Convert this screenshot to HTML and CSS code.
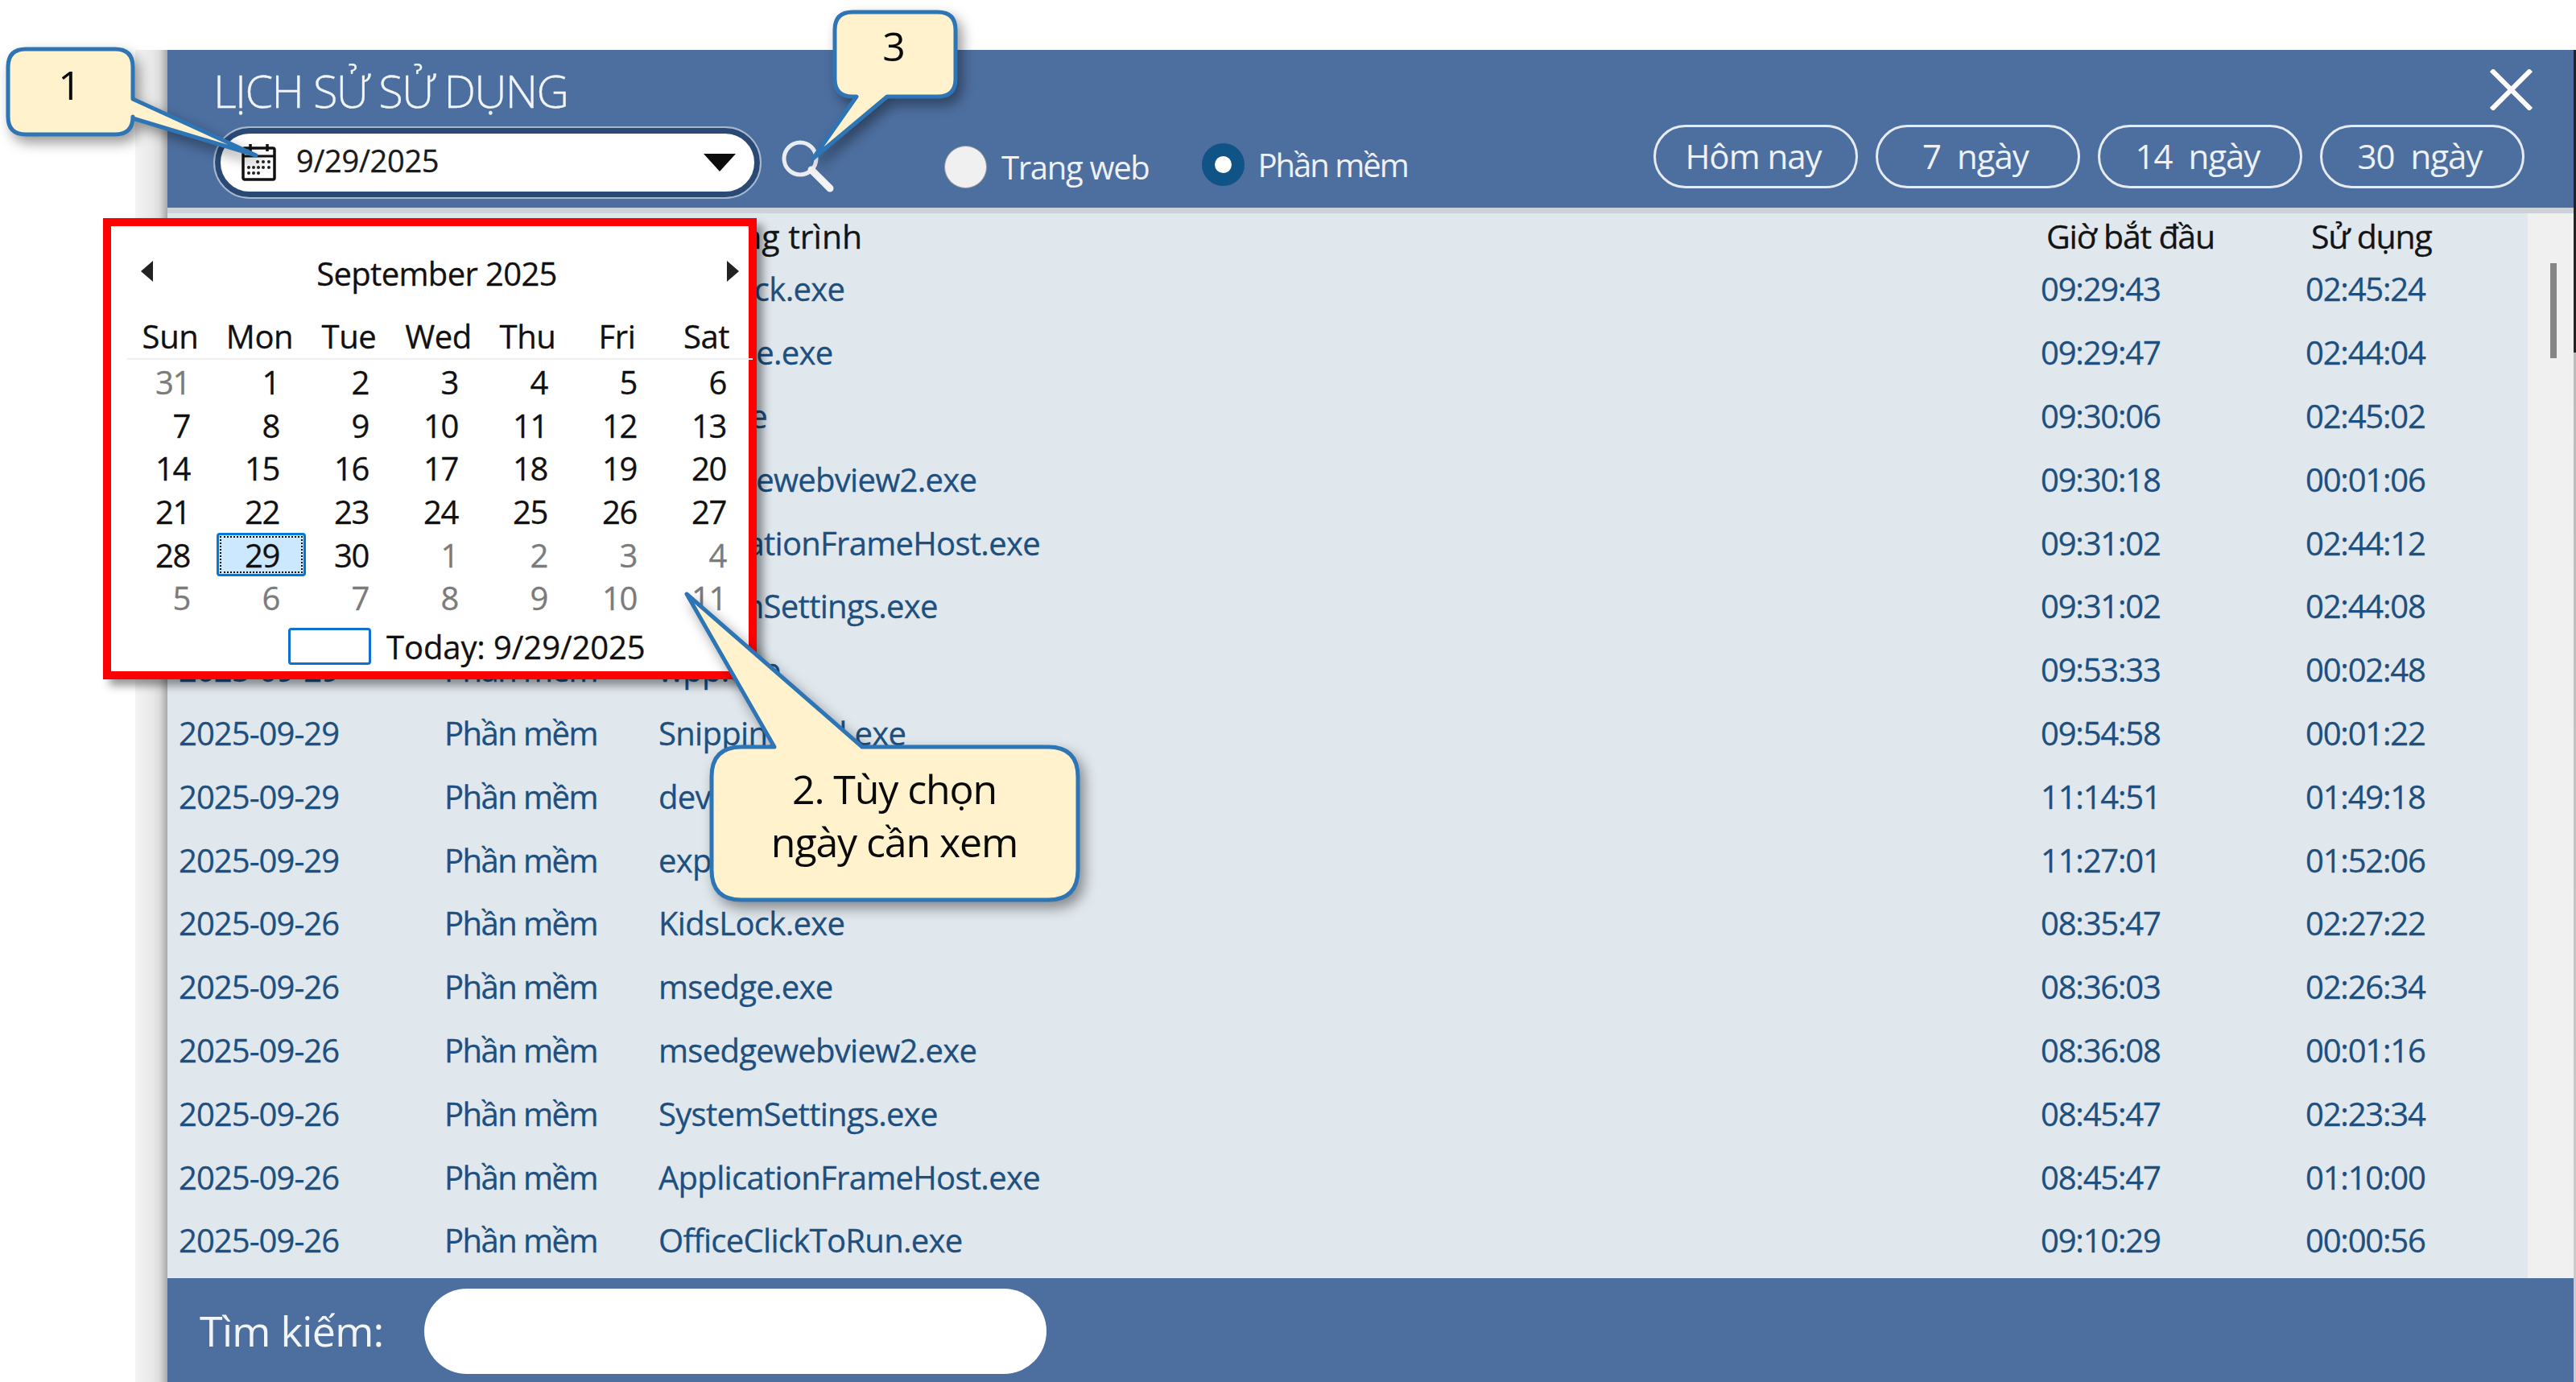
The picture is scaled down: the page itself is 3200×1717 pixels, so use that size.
FILE: index.html
```html
<!DOCTYPE html>
<html lang="vi">
<head>
  <meta charset="UTF-8">
  <title>Lịch sử sử dụng</title>
  <link rel="stylesheet" href="styles.css">
</head>
<body>
<div class="window">
  <div class="edge"></div>
  <div class="main">
    <header class="head">
      <div class="head-top">
        <h1 class="title">LỊCH SỬ SỬ DỤNG</h1>
        <svg class="close" viewBox="0 0 53 51"><path d="M2 1 L51 50 M51 1 L2 50"/></svg>
      </div>
      <div class="controls">
        <div class="datebox">
          <svg class="cal-icon" viewBox="0 0 43 46">
            <rect x="2" y="5" width="39" height="39" rx="2" fill="#fff" stroke="#111" stroke-width="3.500"/>
            <path d="M2 15h39" stroke="#111" stroke-width="3"/>
            <path d="M11 0v9M32 0v9" stroke="#111" stroke-width="3.500"/>
            <g fill="#222">
              <circle cx="20" cy="22" r="2"/><circle cx="27" cy="22" r="2"/><circle cx="34" cy="22" r="2"/>
              <circle cx="9" cy="29" r="2"/><circle cx="15" cy="29" r="2"/><circle cx="21" cy="29" r="2"/><circle cx="27" cy="29" r="2"/><circle cx="34" cy="29" r="2"/>
              <circle cx="9" cy="36" r="2"/><circle cx="15" cy="36" r="2"/><circle cx="21" cy="36" r="2"/>
            </g>
          </svg>
          <span class="datebox-text">9/29/2025</span>
          <span class="datebox-arrow"></span>
        </div>
        <svg class="search" viewBox="0 0 66 66">
          <circle cx="24" cy="24" r="20" fill="none" stroke="#e9edf2" stroke-width="5"/>
          <path d="M38 38 L61 61" stroke="#f4f4f4" stroke-width="9" stroke-linecap="round"/>
        </svg>
        <label class="radio radio-web"><span class="dot"></span>Trang web</label>
        <label class="radio radio-app"><span class="dot dot-on"></span>Phần mềm</label>
        <div class="pills">
          <button class="pill">Hôm nay</button>
          <button class="pill">7&nbsp; ngày</button>
          <button class="pill">14&nbsp; ngày</button>
          <button class="pill">30&nbsp; ngày</button>
        </div>
      </div>
    </header>
    <div class="head-line"></div>
    <div class="content">
      <div class="list">
        <div class="row row-head"><span>Ngày</span><span>Loại</span><span>Chương trình</span><span class="shift">Giờ bắt đầu</span><span class="shift">Sử dụng</span></div>
        <div class="row"><span>2025-09-29</span><span>Phần mềm</span><span>KidsLock.exe</span><span>09:29:43</span><span>02:45:24</span></div>
        <div class="row"><span>2025-09-29</span><span>Phần mềm</span><span>msedge.exe</span><span>09:29:47</span><span>02:44:04</span></div>
        <div class="row"><span>2025-09-29</span><span>Phần mềm</span><span>vds.exe</span><span>09:30:06</span><span>02:45:02</span></div>
        <div class="row"><span>2025-09-29</span><span>Phần mềm</span><span>msedgewebview2.exe</span><span>09:30:18</span><span>00:01:06</span></div>
        <div class="row"><span>2025-09-29</span><span>Phần mềm</span><span>ApplicationFrameHost.exe</span><span>09:31:02</span><span>02:44:12</span></div>
        <div class="row"><span>2025-09-29</span><span>Phần mềm</span><span>SystemSettings.exe</span><span>09:31:02</span><span>02:44:08</span></div>
        <div class="row"><span>2025-09-29</span><span>Phần mềm</span><span>wpp.exe</span><span>09:53:33</span><span>00:02:48</span></div>
        <div class="row"><span>2025-09-29</span><span>Phần mềm</span><span>SnippingTool.exe</span><span>09:54:58</span><span>00:01:22</span></div>
        <div class="row"><span>2025-09-29</span><span>Phần mềm</span><span>devenv.exe</span><span>11:14:51</span><span>01:49:18</span></div>
        <div class="row"><span>2025-09-29</span><span>Phần mềm</span><span>explorer.exe</span><span>11:27:01</span><span>01:52:06</span></div>
        <div class="row"><span>2025-09-26</span><span>Phần mềm</span><span>KidsLock.exe</span><span>08:35:47</span><span>02:27:22</span></div>
        <div class="row"><span>2025-09-26</span><span>Phần mềm</span><span>msedge.exe</span><span>08:36:03</span><span>02:26:34</span></div>
        <div class="row"><span>2025-09-26</span><span>Phần mềm</span><span>msedgewebview2.exe</span><span>08:36:08</span><span>00:01:16</span></div>
        <div class="row"><span>2025-09-26</span><span>Phần mềm</span><span>SystemSettings.exe</span><span>08:45:47</span><span>02:23:34</span></div>
        <div class="row"><span>2025-09-26</span><span>Phần mềm</span><span>ApplicationFrameHost.exe</span><span>08:45:47</span><span>01:10:00</span></div>
        <div class="row"><span>2025-09-26</span><span>Phần mềm</span><span>OfficeClickToRun.exe</span><span>09:10:29</span><span>00:00:56</span></div>
      </div>
      <div class="scroll"><div class="thumb"></div></div>
    </div>
    <footer class="foot">
      <label class="foot-label">Tìm kiếm:</label>
      <div class="foot-input"></div>
    </footer>
  </div>
  <div class="rail"></div>
</div>

<div class="calendar">
  <div class="cal-head">
    <span class="tri tri-left"></span>
    <span class="cal-title">September 2025</span>
    <span class="tri tri-right"></span>
  </div>
  <div class="cal-week">
    <span>Sun</span><span>Mon</span><span>Tue</span><span>Wed</span><span>Thu</span><span>Fri</span><span>Sat</span>
  </div>
  <div class="cal-days">
    <span class="off">31</span><span>1</span><span>2</span><span>3</span><span>4</span><span>5</span><span>6</span>
    <span>7</span><span>8</span><span>9</span><span>10</span><span>11</span><span>12</span><span>13</span>
    <span>14</span><span>15</span><span>16</span><span>17</span><span>18</span><span>19</span><span>20</span>
    <span>21</span><span>22</span><span>23</span><span>24</span><span>25</span><span>26</span><span>27</span>
    <span>28</span><span class="sel">29</span><span>30</span><span class="off">1</span><span class="off">2</span><span class="off">3</span><span class="off">4</span>
    <span class="off">5</span><span class="off">6</span><span class="off">7</span><span class="off">8</span><span class="off">9</span><span class="off">10</span><span class="off">11</span>
  </div>
  <div class="cal-today"><span class="today-box"></span>Today: 9/29/2025</div>
</div>

<!-- callouts sit on top of everything -->
<svg class="callouts" viewBox="0 0 3200 1717">
  <path class="bubble" d="M32 61 H143 Q165 61 165 83 V123 L318 193 L165 147 V145 Q165 167 143 167 H32 Q10 167 10 145 V83 Q10 61 32 61Z"/>
  <path class="bubble" d="M1059 15 H1165 Q1187 15 1187 37 V98 Q1187 120 1165 120 H1102 L1010 197 L1064 120 H1059 Q1037 120 1037 98 V37 Q1037 15 1059 15Z"/>
  <path class="bubble" d="M921 928 H962 L853 738 L1071 928 H1302 Q1339 928 1339 965 V1081 Q1339 1118 1302 1118 H921 Q884 1118 884 1081 V965 Q884 928 921 928Z"/>
  <text class="bubble-text" x="86" y="124">1</text>
  <text class="bubble-text" x="1110" y="76">3</text>
  <text class="bubble-text" x="1111" y="999">2. Tùy chọn</text>
  <text class="bubble-text" x="1111" y="1065">ngày cần xem</text>
</svg>
</body>
</html>
```

FILE: styles.css
```css
html, body {
  margin: 0;
  padding: 0;
  background: #fff;
  width: 3200px;
  height: 1717px;
  overflow: hidden;
}

body {
  font-family: "Open Sans", "Noto Sans", sans-serif;
  position: relative;
}

.window {
  display: flex;
  margin: 62px 0 0 168px;
  width: 3032px;
  height: 1655px;
}

.edge {
  width: 40px;
  background: linear-gradient(to right, #f4f4f4, #e8e8e8 55%, #dcdcdc 75%, #a8a8a8);
}

.main {
  width: 2989px;
  display: flex;
  flex-direction: column;
}

.rail {
  width: 3px;
  background: linear-gradient(to bottom, #222 0, #222 376px, #bbb 376px, #ccc 100%);
}

/* header */
.head {
  height: 196px;
  background: #4d6fa0;
  color: #fff;
  padding: 0 61px 0 57px;
  box-sizing: border-box;
}

.head-top {
  display: flex;
  justify-content: space-between;
  align-items: flex-start;
  height: 93px;
}

.title {
  margin: 13px 0 0;
  font-size: 56px;
  font-weight: 300;
  letter-spacing: -1.7px;
  line-height: 74px;
  color: #f2f5f8;
  -webkit-text-stroke: 0.3px #f2f5f8;
}

.close {
  width: 53px;
  height: 51px;
  margin: 24px -10px 0 0;
}

.close path {
  stroke: #fff;
  stroke-width: 6;
  fill: none;
}

.controls {
  display: flex;
  align-items: flex-start;
}

.datebox {
  width: 677px;
  height: 86px;
  margin: 4px 0 0 2px;
  box-sizing: border-box;
  background: #fff;
  border: 7px solid #2a4a75;
  outline: 2px solid #a9b8cd;
  border-radius: 43px;
  display: flex;
  align-items: center;
  padding: 0 23px 0 26px;
}

.cal-icon {
  width: 43px;
  height: 46px;
}

.datebox-text {
  margin-left: 25px;
  padding-bottom: 7px;
  font-size: 38px;
  letter-spacing: -0.3px;
  color: #1a1a1a;
  -webkit-text-stroke: 0.3px #1a1a1a;
}

.datebox-arrow {
  margin-left: auto;
  width: 0;
  height: 0;
  border-left: 20px solid transparent;
  border-right: 20px solid transparent;
  border-top: 22px solid #0c0c0c;
}

.search {
  width: 66px;
  height: 66px;
  margin: 18px 0 0 26px;
}

.radio {
  display: flex;
  align-items: center;
  font-size: 40px;
  letter-spacing: -1.3px;
  color: #eef1f5;
}

.radio-web {
  margin: 25px 0 0 137px;
}

.radio-app {
  margin: 22px 0 0 66px;
  letter-spacing: -2px;
}

.dot {
  width: 53px;
  height: 53px;
  box-sizing: border-box;
  border-radius: 50%;
  background: #f0f0f0;
  border: 1px solid #9a9a9a;
  margin-right: 18px;
}

.dot-on {
  background: #fff;
  border: 16px solid #0f5387;
  margin-right: 16px;
}

.pills {
  display: flex;
  gap: 22px;
  margin-left: auto;
}

.pill {
  width: 254px;
  height: 79px;
  border: 3px solid #e6ebf2;
  border-radius: 40px;
  background: transparent;
  color: #eef1f5;
  font: 42px "Open Sans", sans-serif;
  letter-spacing: -1px;
  padding: 0 6px 3px 0;
}

.head-line {
  height: 7px;
  background: #cdd2d9;
}

/* list */
.content {
  flex: 1;
  display: flex;
  min-height: 0;
}

.list {
  flex: 1;
  background: #e0e7ed;
  padding-left: 14px;
}

.row {
  display: grid;
  grid-template-columns: 330px 266px 1717px 329px 1fr;
  height: 78.8px;
  align-items: center;
  font-size: 40px;
  color: #1d4f7f;
  white-space: nowrap;
  -webkit-text-stroke: 0.3px #1d4f7f;
}

.row span:nth-child(1) {
  letter-spacing: -0.95px;
}

.row span:nth-child(2) {
  letter-spacing: -1.55px;
}

.row span:nth-child(3) {
  letter-spacing: -0.7px;
}

.row span:nth-child(4), .row span:nth-child(5) {
  letter-spacing: -1.2px;
}

.row-head {
  height: 54.5px;
  color: #141414;
  padding-bottom: 1px;
  box-sizing: border-box;
  font-size: 41px;
  -webkit-text-stroke: 0.3px #141414;
}

.row-head span:nth-child(3) {
  letter-spacing: 0;
}

.row-head .shift {
  letter-spacing: -0.15px;
  padding-left: 7px;
}

.scroll {
  width: 57px;
  background: #f0f0f0;
  padding: 62px 0 0 28px;
  box-sizing: border-box;
}

.thumb {
  width: 8px;
  height: 118px;
  background: #858585;
}

/* search bar */
.foot {
  height: 129px;
  background: #4d6fa0;
  display: flex;
  align-items: center;
  padding-left: 40px;
}

.foot-label {
  width: 279px;
  font-size: 52px;
  letter-spacing: -0.7px;
  color: #f2f5f8;
}

.foot-input {
  width: 773px;
  height: 106px;
  background: #fff;
  border-radius: 53px;
  margin-top: 2px;
}

/* popup calendar */
.calendar {
  position: absolute;
  left: 128px;
  top: 271px;
  width: 812px;
  height: 573px;
  box-sizing: border-box;
  border: 10px solid #ff0000;
  background: #fff;
  box-shadow: 8px 8px 10px rgba(0, 0, 0, 0.4);
  font-size: 40px;
  letter-spacing: -1.4px;
  color: #111;
  padding-left: 20px;
  -webkit-text-stroke: 0.3px #111;
}

.cal-head {
  display: flex;
  align-items: center;
  justify-content: space-between;
  height: 104px;
  padding: 4px 7px 0 17px;
  width: 743px;
}

.cal-title {
  font-size: 40px;
  letter-spacing: -0.65px;
  margin: 5px 0 0 -8px;
}

.tri {
  width: 0;
  height: 0;
  border-top: 13px solid transparent;
  border-bottom: 13px solid transparent;
}

.tri-left {
  border-right: 15px solid #222;
}

.tri-right {
  border-left: 15px solid #222;
}

.cal-week {
  display: grid;
  grid-template-columns: repeat(7, 111px);
  width: 777px;
  height: 58px;
  align-items: center;
  text-align: center;
  border-bottom: 2px solid #f0f0f0;
  box-sizing: border-box;
  letter-spacing: -0.4px;
  text-indent: -4px;
}

.cal-days {
  display: grid;
  grid-template-columns: repeat(7, 111px);
  grid-auto-rows: 53.6px;
  width: 777px;
  margin-top: 1px;
}

.cal-days span {
  display: flex;
  align-items: center;
  justify-content: flex-end;
  padding-right: 33px;
}

.cal-days .off {
  color: #7b7b7b;
  -webkit-text-stroke: 0.3px #7b7b7b;
}

.cal-days .sel {
  background: #cce8ff;
  border: 3px solid #0078d7;
  outline: 2px dotted #111;
  outline-offset: -6px;
  border-radius: 4px;
  padding-right: 30px;
  box-sizing: border-box;
}

.cal-today {
  display: flex;
  align-items: center;
  padding-left: 200px;
  margin-top: 6px;
  letter-spacing: -0.1px;
}

.today-box {
  width: 103px;
  height: 46px;
  box-sizing: border-box;
  border: 3px solid #0f70d0;
  border-radius: 4px;
  margin-right: 19px;
}

/* callouts */
.callouts {
  position: absolute;
  left: 0;
  top: 0;
  width: 3200px;
  height: 1717px;
  pointer-events: none;
}

.bubble {
  fill: #fff2cc;
  stroke: #2e75b6;
  stroke-width: 5;
  stroke-linejoin: round;
  filter: drop-shadow(6px 8px 8px rgba(0, 0, 0, 0.4));
}

.bubble-text {
  font-size: 50px;
  letter-spacing: -1.1px;
  text-anchor: middle;
  fill: #0a0a0a;
}
```
